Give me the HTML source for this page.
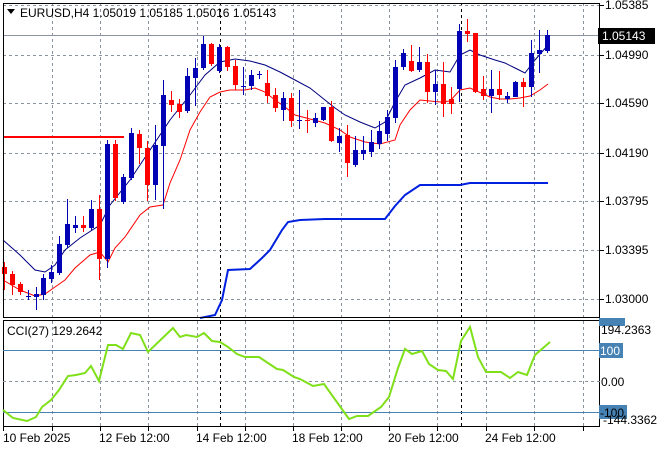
<!DOCTYPE html>
<html><head><meta charset="utf-8"><style>
body{margin:0;background:#fff;width:660px;height:450px;overflow:hidden}
svg{display:block;font-family:"Liberation Sans",sans-serif}
</style></head><body>
<svg id="s" width="660" height="450" xmlns="http://www.w3.org/2000/svg"></svg>
<script>
const s=document.getElementById('s');let h='';
const grid='#8a94a0';
// vertical grid
const vx=[52,100,148,197,245,293,341,389,437,486,534,583];
vx.forEach(x=>{h+=`<line x1="${x}.5" y1="3" x2="${x}.5" y2="317" stroke="${grid}" stroke-dasharray="3,3"/><line x1="${x}.5" y1="321" x2="${x}.5" y2="426" stroke="${grid}" stroke-dasharray="3,3"/>`});
[220,461].forEach(x=>{h+=`<line x1="${x}.5" y1="3" x2="${x}.5" y2="317" stroke="#000" stroke-dasharray="3,3"/><line x1="${x}.5" y1="321" x2="${x}.5" y2="426" stroke="#000" stroke-dasharray="3,3"/>`});
const py=[[5,'1.05385'],[55,'1.04990'],[103,'1.04590'],[153,'1.04190'],[201,'1.03795'],[250,'1.03395'],[299,'1.03000']];
py.forEach(([y,t])=>{h+=`<line x1="3" y1="${y}.5" x2="600" y2="${y}.5" stroke="${grid}" stroke-dasharray="3,3"/><line x1="600" y1="${y}.5" x2="604" y2="${y}.5" stroke="#000"/><text x="605" y="${y+4}" font-size="12">${t}</text>`});
h+=`<line x1="3" y1="35.5" x2="600" y2="35.5" stroke="#8a94a0"/>`;
// red horizontal
h+=`<line x1="3" y1="137" x2="124" y2="137" stroke="#f00" stroke-width="2"/>`;
// blue step line
h+=`<polyline fill="none" stroke="#0020e0" stroke-width="2" points="200,318 215,315 222,300 228,270 250,269 262,258 270,250 282,230 288,222 300,220 325,219 385,219 395,206 405,195 420,185 460,185 470,183 548,183"/>`;
// MAs
h+=`<polyline fill="none" stroke="#000080" points="3,240 20,255 35,270 45,272 55,265 65,250 80,238 100,225 110,205 130,180 150,150 170,120 190,95 205,75 220,62 235,59 250,61 265,65 280,72 295,80 310,88 325,100 335,108 345,115 360,122 375,128 385,122 395,102 405,85 420,78 435,70 450,72 460,55 470,50 480,55 495,60 505,63 515,68 525,73 535,60 548,45"/>`;
h+=`<polyline fill="none" stroke="#f00" points="3,280 20,290 35,296 45,294 55,287 65,280 75,268 90,255 100,252 108,262 115,248 125,237 140,215 150,207 163,205 170,183 180,160 190,130 200,112 210,97 220,92 230,90 245,90 255,88 265,92 275,100 285,107 295,115 310,119 325,123 340,130 350,137 365,142 380,144 395,140 400,125 410,110 420,100 440,102 450,101 460,90 470,88 490,97 500,99 510,99 520,98 530,96 540,90 548,84"/>`;
// candles: x,c(b/r),top,bot,hi,lo
const C=[[4,'r',267,274,262,290],[12,'r',274,285,271,295],[20,'r',284,292,282,295],[28,'b',296,297,290,300],[36,'b',294,297,287,310],[43,'b',278,295,274,300],[51,'b',272,279,265,283],[59,'b',244,273,236,275],[67,'b',224,245,199,248],[75,'b',225,228,216,233],[83,'r',225,228,216,232],[91,'b',209,228,200,230],[99,'r',209,259,195,280],[107,'b',144,259,140,268],[115,'r',144,198,140,201],[123,'b',177,202,174,204],[131,'b',133,178,128,180],[139,'r',134,148,130,164],[147,'r',148,185,141,201],[155,'b',145,185,125,200],[163,'b',95,146,80,209],[171,'r',100,105,91,112],[179,'r',104,112,99,118],[187,'b',76,111,68,113],[195,'b',68,78,58,106],[203,'b',44,68,36,70],[211,'r',44,64,43,66],[219,'b',47,71,44,73],[227,'r',47,67,46,71],[235,'r',66,85,60,90],[243,'b',86,87,67,95],[251,'b',75,86,70,90],[259,'b',74,75,71,79],[267,'r',83,96,70,103],[275,'r',95,108,88,112],[283,'b',98,110,92,121],[291,'r',98,121,93,127],[299,'b',120,121,90,129],[307,'r',120,121,110,133],[315,'b',118,123,113,127],[323,'b',107,120,107,121],[331,'r',107,141,101,142],[339,'b',136,143,128,152],[347,'r',135,163,125,177],[355,'b',150,165,136,167],[363,'b',150,154,136,160],[371,'b',142,152,130,157],[379,'b',131,144,121,149],[387,'b',117,134,110,141],[395,'b',67,118,60,123],[403,'b',53,67,49,70],[411,'r',61,71,45,72],[419,'b',62,70,47,72],[427,'r',62,92,54,103],[435,'b',84,92,70,105],[443,'r',84,104,62,117],[451,'r',99,104,87,114],[459,'b',31,89,24,102],[467,'r',31,34,19,42],[475,'r',33,92,33,93],[483,'r',89,96,76,100],[491,'b',89,96,70,113],[499,'r',89,95,71,100],[507,'b',96,99,92,103],[515,'b',82,97,81,97],[523,'r',82,87,78,107],[531,'b',53,87,40,97],[539,'b',50,54,30,73],[547,'b',35,51,30,53]];
C.forEach(([x,c,t,b,hi,lo])=>{const col=c=='b'?'#0000b4':'#f00';h+=`<line x1="${x+.5}" y1="${hi}" x2="${x+.5}" y2="${lo}" stroke="${col}"/><rect x="${x-2}" y="${t}" width="5" height="${Math.max(1,b-t)}" fill="${col}"/>`});
// frames
h+=`<rect x="3.5" y="3.5" width="596" height="314" fill="none" stroke="#000"/>`;
h+=`<rect x="3.5" y="320.5" width="596" height="106" fill="none" stroke="#000"/>`;
// header
h+=`<path d="M7 9 L15 9 L11 14Z" fill="#000"/><text x="20" y="17" font-size="12">EURUSD,H4  1.05019 1.05185 1.05016 1.05143</text>`;
h+=`<rect x="598" y="28" width="57" height="16" fill="#000"/><text x="602" y="40" font-size="12" fill="#fff">1.05143</text>`;
// CCI panel
h+=`<line x1="3" y1="350.5" x2="600" y2="350.5" stroke="#4682b4"/><line x1="3" y1="412.5" x2="600" y2="412.5" stroke="#4682b4"/><line x1="3" y1="381.5" x2="600" y2="381.5" stroke="${grid}" stroke-dasharray="3,3"/>`;
h+=`<polyline fill="none" stroke="#7fe01a" stroke-width="2" points="3,410 13,418 27,421 36,417 42,407 51,400 59,390 68,376 76,375 85,373 91,366 99,381 108,345 116,345 123,349 131,333 140,335 148,352 173,328 180,337 186,335 197,337 204,333 212,341 220,342 228,347 237,354 245,357 259,357 277,369 283,370 294,377 300,379 313,386 324,384 349,419 357,416 368,416 381,407 389,397 398,368 405,349 412,354 422,351 429,364 438,370 446,371 453,379 461,341 470,327 478,357 486,372 501,372 510,378 518,372 527,375 535,355 550,342"/>`;
h+=`<text x="7" y="335" font-size="12">CCI(27) 129.2642</text>`;
h+=`<rect x="599" y="318" width="26" height="8" fill="#4682b4"/>`;
h+=`<text x="601" y="334" font-size="12">194.2363</text>`;
h+=`<rect x="599" y="343" width="24" height="15" fill="#4682b4"/><text x="600" y="355" font-size="12" fill="#fff">100</text>`;
h+=`<text x="601" y="386" font-size="12">0.00</text>`;
h+=`<rect x="599" y="405" width="28" height="14" fill="#4682b4"/><text x="600" y="417" font-size="12" fill="#000">-100</text>`;
h+=`<text x="603" y="424" font-size="12">-144.3362</text>`;
// time axis
const tl=[[3,'10 Feb 2025'],[99,'12 Feb 12:00'],[196,'14 Feb 12:00'],[292,'18 Feb 12:00'],[388,'20 Feb 12:00'],[485,'24 Feb 12:00']];
tl.forEach(([x,t])=>{h+=`<text x="${x}" y="442" font-size="12">${t}</text>`});
[3,52,100,148,197,245,293,341,389,437,486,534,583].forEach(x=>{h+=`<line x1="${x}.5" y1="427" x2="${x}.5" y2="431" stroke="#000"/>`});
s.innerHTML=h;
</script>
</body></html>
